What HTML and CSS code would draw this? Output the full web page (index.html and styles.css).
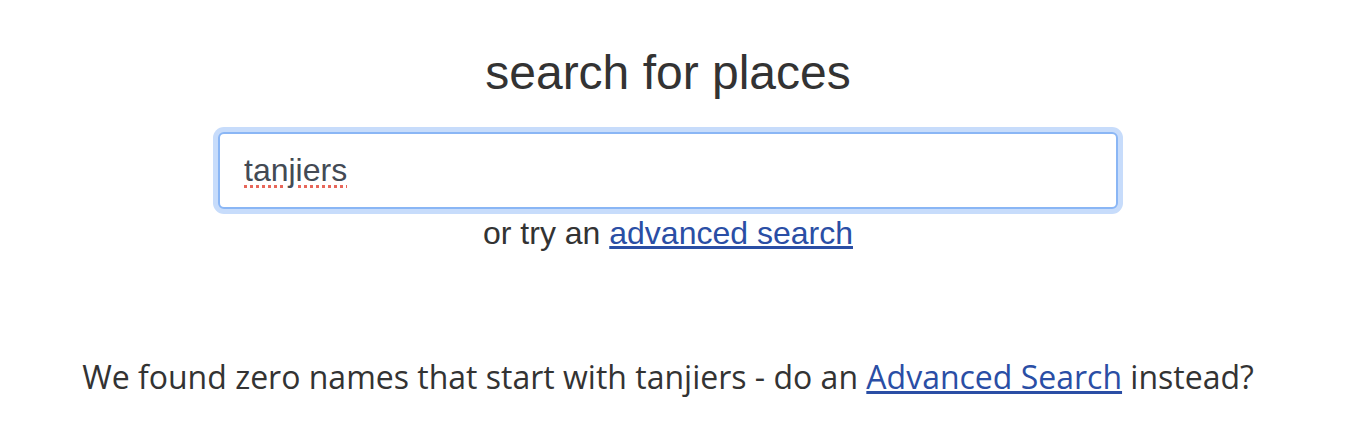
FILE: index.html
```html
<!DOCTYPE html>
<html>
<head>
<meta charset="utf-8">
<link rel="stylesheet" href="styles.css">
</head>
<body>
<div class="page">
  <h1 class="title">search for places</h1>
  <div class="search">
    <div class="field"><span class="query">tanjiers</span></div>
  </div>
  <p class="alt">or try an <a href="#" class="link">advanced search</a></p>
  <p class="result">We found zero names that start with tanjiers - do an <a href="#" class="link">Advanced Search</a> instead?</p>
</div>
</body>
</html>
```
FILE: styles.css
```css
html, body {
  margin: 0;
  padding: 0;
  background: #fff;
}
.page {
  display: flex;
  flex-direction: column;
  align-items: center;
  padding-right: 18px;
  color: #333;
}
.title {
  font-family: "Liberation Sans", Arial, sans-serif;
  font-weight: normal;
  font-size: 48px;
  line-height: 56px;
  margin: 45px 0 0 0;
  color: #333;
}
.search {
  margin-top: 26px;
  padding: 5px;
  border-radius: 11px;
  background: #c7dcfb;
}
.field {
  box-sizing: border-box;
  width: 900px;
  height: 77px;
  border: 2px solid #8ab6f5;
  border-radius: 6px;
  background: #fff;
  display: flex;
  align-items: center;
  padding-left: 24px;
}
.query {
  font-family: "Liberation Sans", Arial, sans-serif;
  font-size: 32px;
  color: #434a54;
  text-decoration: underline dotted #e8675a;
  text-decoration-thickness: 3px;
  text-underline-offset: 4px;
}
.alt {
  font-family: "Liberation Sans", Arial, sans-serif;
  font-size: 32px;
  margin: 1px 0 0 0;
  line-height: 36px;
}
.link {
  color: #2a4ea5;
  text-decoration: underline;
}
.result {
  font-family: "Open Sans", sans-serif;
  font-size: 32px;
  margin: 104px 0 0 0;
  line-height: 44px;
}
```
